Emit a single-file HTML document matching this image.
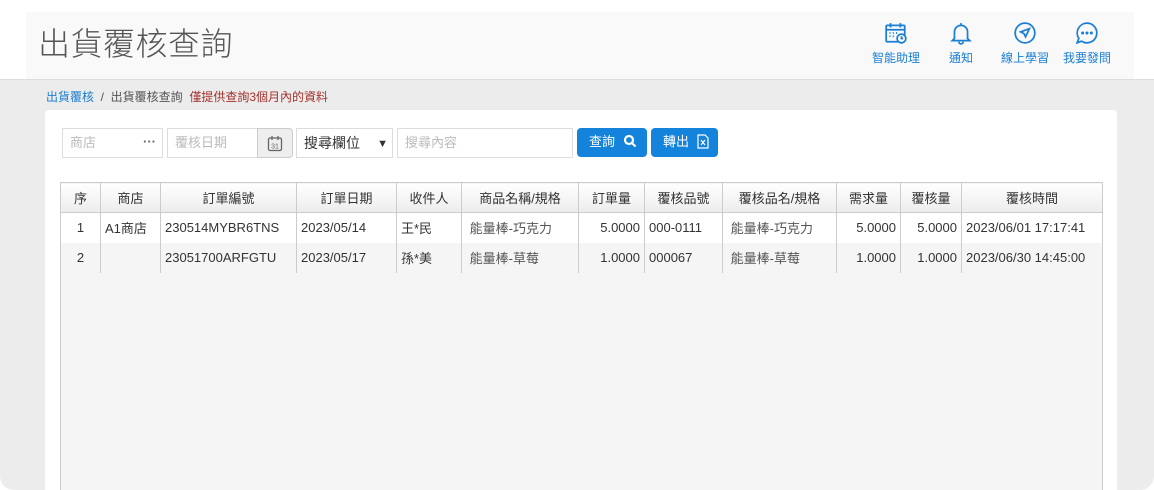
<!DOCTYPE html>
<html><head><meta charset="utf-8"><style>
*{box-sizing:border-box;margin:0;padding:0}
html,body{width:1154px;height:490px;overflow:hidden}
body{background:#fff;font-family:"Liberation Sans","Noto Sans CJK TC",sans-serif;position:relative}
.hdr{position:absolute;left:26px;top:12px;width:1108px;height:67px;background:#f9f9f9}
.title{position:absolute;left:38px;top:24px;font-size:32px;line-height:40px;color:#555;font-weight:300;letter-spacing:0.5px}
.main{position:absolute;left:0;top:79px;width:1154px;height:411px;background:#ececec;border-top:1px solid #ddd;border-radius:0 0 14px 14px}
.bc{position:absolute;left:46px;top:88px;font-size:12px;color:#555}
.bc .a{color:#1a7fd4}.bc .r{color:#a3312b}
.card{position:absolute;left:45px;top:110px;width:1072px;height:400px;background:#fff;border-radius:4px}
.inp{position:absolute;top:128px;height:30px;border:1px solid #ddd;background:#fff;font-size:13px;line-height:16px;color:#bbb;padding:6px 7px}
.btn{position:absolute;top:128px;height:29px;background:#1383dc;border-radius:4px;color:#fff;font-size:13px;line-height:16px;padding:6px 0 0 12px}
.icons{position:absolute;top:21px;font-size:12px;color:#1a7fd4;text-align:center}
.icons svg{display:block;margin:0 auto 4px}
table{position:absolute;left:60px;top:182px;width:1043px;border-collapse:collapse;font-size:13px;color:#333}
th{height:30px;font-weight:normal;background:linear-gradient(#fff,#ececec);border:1px solid #ccc;}
td{height:30px;border-left:1px solid #ccc;border-right:1px solid #ccc;padding:0 4px;white-space:nowrap}
tr.e td{background:#f5f5f5}
.n{text-align:right}.c{text-align:center}.g{color:#555}
.fill{position:absolute;left:60px;top:272px;width:1043px;height:220px;background:#f5f5f5;border-left:1px solid #ccc;border-right:1px solid #ccc}
</style></head><body>
<div class="hdr"></div>
<div class="title">出貨覆核查詢</div>
<div class="icons" style="left:872px"><svg width="24" height="24" viewBox="0 0 22 22" fill="none" stroke="#1a7fd4" stroke-width="1.6"><rect x="2" y="4" width="17" height="15" rx="1"/><path d="M2 8h17M6 2v4M15 2v4"/><circle cx="16" cy="16" r="4" fill="#f9f9f9"/><path d="M16 14v2h1.5"/><path d="M5 11h1M8 11h1M11 11h1M5 14h1M8 14h1"/></svg>智能助理</div>
<div class="icons" style="left:949px"><svg width="24" height="24" viewBox="0 0 22 22" fill="none" stroke="#1a7fd4" stroke-width="1.6"><path d="M11 2v2M5 16V10a6 6 0 0112 0v6l2 2H3z M9 19a2 2 0 004 0"/></svg>通知</div>
<div class="icons" style="left:1001px"><svg width="24" height="24" viewBox="0 0 22 22" fill="none" stroke="#1a7fd4" stroke-width="1.6"><circle cx="11" cy="11" r="9"/><path d="M15 7l-8 3 3 1.5 1.5 3z"/></svg>線上學習</div>
<div class="icons" style="left:1063px"><svg width="24" height="24" viewBox="0 0 22 22" fill="none" stroke="#1a7fd4" stroke-width="1.6"><path d="M11 2a9 9 0 11-5 16.5L2 20l1.5-4A9 9 0 0111 2z"/><circle cx="7" cy="11" r=".6" fill="#1a7fd4"/><circle cx="11" cy="11" r=".6" fill="#1a7fd4"/><circle cx="15" cy="11" r=".6" fill="#1a7fd4"/></svg>我要發問</div>
<div class="main"></div>
<div class="bc"><span class="a">出貨覆核</span>&nbsp;&nbsp;/&nbsp;&nbsp;出貨覆核查詢&nbsp;&nbsp;<span class="r">僅提供查詢3個月內的資料</span></div>
<div class="card"></div>
<div class="inp" style="left:62px;width:101px">商店<span style="position:absolute;right:6px;top:5px;color:#666;font-weight:bold">···</span></div>
<div class="inp" style="left:167px;width:91px">覆核日期</div>
<div class="inp" style="left:257px;width:36px;background:#eee;border-color:#ccc;border-radius:0 4px 4px 0;padding:6px 9px"><svg width="16" height="17" viewBox="0 0 16 17" fill="none" stroke="#666" stroke-width="1.3"><rect x="1.5" y="3" width="13" height="12.5" rx="1.5"/><path d="M5 1v4M11 1v4"/><text x="8" y="13.5" font-size="7" text-anchor="middle" fill="#666" stroke="none" font-family="Liberation Sans">31</text></svg></div>
<div class="inp" style="left:296px;width:97px;color:#333;font-size:14px">搜尋欄位<span style="position:absolute;right:4px;top:7px;font-size:11px">▼</span></div>
<div class="inp" style="left:397px;width:176px">搜尋內容</div>
<div class="btn" style="left:577px;width:70px">查詢 <svg width="14" height="14" viewBox="0 0 14 14" style="vertical-align:-2px;margin-left:4px" fill="none" stroke="#fff" stroke-width="2.2"><circle cx="6" cy="6" r="4"/><path d="M9 9l3.5 3.5"/></svg></div>
<div class="btn" style="left:651px;width:67px">轉出 <svg width="12" height="15" viewBox="0 0 12 15" style="vertical-align:-3px;margin-left:4px" fill="none" stroke="#fff" stroke-width="1.2"><path d="M1 1h7l3 3v10H1z"/><path d="M4 6l4 5M8 6l-4 5"/></svg></div>
<div class="fill"></div>
<table>
<tr><th style="width:40px">序</th><th style="width:60px">商店</th><th style="width:136px">訂單編號</th><th style="width:100px">訂單日期</th><th style="width:65px">收件人</th><th style="width:117px">商品名稱/規格</th><th style="width:66px">訂單量</th><th style="width:78px">覆核品號</th><th style="width:114px">覆核品名/規格</th><th style="width:64px">需求量</th><th style="width:61px">覆核量</th><th>覆核時間</th></tr>
<tr><td class="c">1</td><td>A1商店</td><td>230514MYBR6TNS</td><td>2023/05/14</td><td>王*民</td><td class="g">&nbsp;能量棒-巧克力</td><td class="n">5.0000</td><td>000-0111</td><td class="g">&nbsp;能量棒-巧克力</td><td class="n">5.0000</td><td class="n">5.0000</td><td>2023/06/01 17:17:41</td></tr>
<tr class="e"><td class="c">2</td><td></td><td>23051700ARFGTU</td><td>2023/05/17</td><td>孫*美</td><td class="g">&nbsp;能量棒-草莓</td><td class="n">1.0000</td><td>000067</td><td class="g">&nbsp;能量棒-草莓</td><td class="n">1.0000</td><td class="n">1.0000</td><td>2023/06/30 14:45:00</td></tr>
</table>
</body></html>
